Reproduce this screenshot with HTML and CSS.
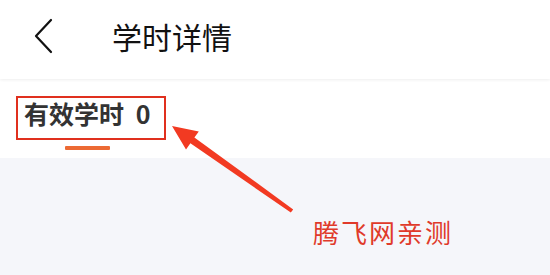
FILE: index.html
```html
<!DOCTYPE html>
<html lang="zh-CN">
<head>
<meta charset="utf-8">
<title>学时详情</title>
<link rel="stylesheet" href="styles.css">
</head>
<body>
<div class="page">
  <header class="topbar">
    <svg class="back" width="22" height="36" viewBox="0 0 22 36">
      <polyline points="18,2 3,18 18,34" fill="none" stroke="#111" stroke-width="2.2" stroke-linecap="round" stroke-linejoin="round"/>
    </svg>
    <h1 class="title">学时详情</h1>
  </header>
  <section class="tabs">
    <div class="tab-label">有效学时 0</div>
    <div class="tab-underline"></div>
  </section>
  <main class="content">
    <div class="caption">腾飞网亲测</div>
  </main>
  <svg class="arrow" width="550" height="275" viewBox="0 0 550 275">
    <polygon points="172,126 198.8,131.4 194.4,137.5 293.2,209.4 290.8,212.6 190.4,143.3 186,149.4" fill="#f23a22"/>
  </svg>
</div>
</body>
</html>
```
FILE: styles.css
```css
html, body {
  margin: 0;
  padding: 0;
}
body {
  width: 550px;
  height: 275px;
  overflow: hidden;
  font-family: "Noto Sans CJK SC", "Noto Sans", sans-serif;
}
.page {
  position: relative;
  width: 550px;
  height: 275px;
  display: flex;
  flex-direction: column;
  background: #f5f6fa;
}
.topbar {
  position: relative;
  z-index: 2;
  height: 79px;
  box-sizing: border-box;
  padding-bottom: 8px;
  flex: none;
  display: flex;
  align-items: center;
  background: #fff;
  box-shadow: 0 1px 3px rgba(0, 0, 0, 0.07);
}
.back {
  margin-left: 33px;
  flex: none;
}
.title {
  margin: 0 0 0 57px;
  font-size: 30px;
  font-weight: 400;
  color: #111;
  line-height: 1;
}
.tabs {
  height: 79px;
  flex: none;
  background: #fff;
  padding: 17px 0 0 16px;
  box-sizing: border-box;
}
.tab-label {
  display: inline-block;
  box-sizing: border-box;
  width: 150px;
  height: 44px;
  border: 2px solid #e0301e;
  padding-left: 6px;
  font-size: 25px;
  font-weight: 700;
  color: #333;
  line-height: 30px;
  word-spacing: 6px;
  white-space: nowrap;
}
.tab-underline {
  width: 45px;
  height: 4px;
  margin: 6px 0 0 49px;
  background: #ec6a34;
  border-radius: 1px;
}
.content {
  flex: 1;
  background: #f5f6fa;
  padding: 61px 0 0 313px;
}
.caption {
  font-size: 26px;
  line-height: 1;
  letter-spacing: 2px;
  color: #e03a2a;
  white-space: nowrap;
}
.arrow {
  position: absolute;
  left: 0;
  top: 0;
  z-index: 3;
  pointer-events: none;
}
```
